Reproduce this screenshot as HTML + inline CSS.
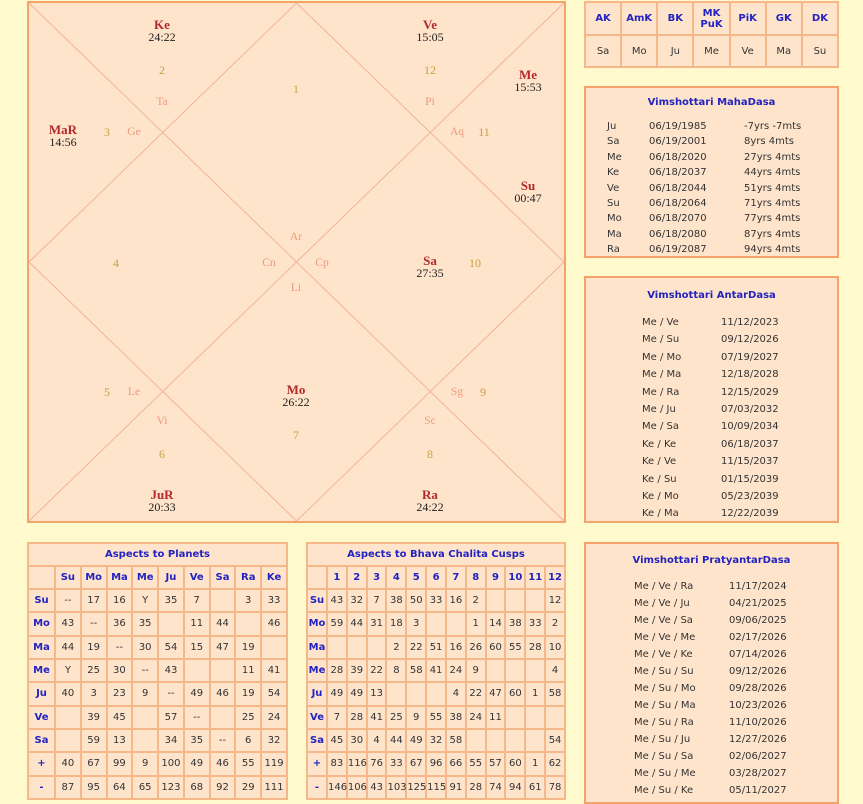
<!DOCTYPE html>
<html><head><meta charset="utf-8"><style>
*{margin:0;padding:0;box-sizing:border-box}
body{width:863px;height:800px;background:#fffacd;position:relative;overflow:hidden;font-family:"DejaVu Sans","Liberation Sans",sans-serif;font-size:10px;color:#333}
.box{position:absolute;background:#ffe4cc;border:2px solid #f4a46a}
.c{position:absolute;transform:translate(-50%,-50%);font-family:"Liberation Serif",serif;white-space:nowrap;text-align:center;line-height:12px}
.p{color:#b22a2a;font-weight:bold;font-size:13px;display:block}
.d{color:#222;font-size:12px;display:block}
.n{color:#c9a040;font-size:12px}
.s{color:#eb9a7c;font-size:11.5px}
table{border-collapse:collapse;table-layout:fixed;position:absolute;background:#ffe4cc}
td{border:2px solid #f6b888;text-align:center;font-size:10px;color:#333;padding:0;white-space:nowrap}
.h{color:#2323c0;font-weight:bold}
.t{position:absolute;color:#2323c0;font-weight:bold;font-size:10px;text-align:center;left:0;right:0}
.r{position:absolute;white-space:nowrap;font-size:10px;color:#333}
</style></head><body>

<div class="box" style="left:27px;top:1px;width:539px;height:522px">
<svg width="535" height="518" style="position:absolute;left:0;top:0" stroke="#f2b493" stroke-width="1" fill="none">
<line x1="0" y1="0" x2="535" y2="518"/><line x1="535" y1="0" x2="0" y2="518"/>
<polygon points="267.5,0 535,259 267.5,518 0,259"/>
</svg>
</div>
<div class="c" style="left:162px;top:31px"><span class="p">Ke</span><span class="d">24:22</span></div>
<div class="c n" style="left:162px;top:70px">2</div>
<div class="c s" style="left:162px;top:102px">Ta</div>
<div class="c n" style="left:296px;top:89px">1</div>
<div class="c" style="left:430px;top:31px"><span class="p">Ve</span><span class="d">15:05</span></div>
<div class="c n" style="left:430px;top:70px">12</div>
<div class="c s" style="left:430px;top:102px">Pi</div>
<div class="c" style="left:528px;top:81px"><span class="p">Me</span><span class="d">15:53</span></div>
<div class="c s" style="left:457px;top:132px">Aq</div>
<div class="c n" style="left:484px;top:132px">11</div>
<div class="c" style="left:63px;top:136px"><span class="p">MaR</span><span class="d">14:56</span></div>
<div class="c n" style="left:107px;top:132px">3</div>
<div class="c s" style="left:134px;top:132px">Ge</div>
<div class="c" style="left:528px;top:192px"><span class="p">Su</span><span class="d">00:47</span></div>
<div class="c s" style="left:296px;top:237px">Ar</div>
<div class="c s" style="left:269px;top:263px">Cn</div>
<div class="c s" style="left:322px;top:263px">Cp</div>
<div class="c n" style="left:116px;top:263px">4</div>
<div class="c" style="left:430px;top:267px"><span class="p">Sa</span><span class="d">27:35</span></div>
<div class="c n" style="left:475px;top:263px">10</div>
<div class="c s" style="left:296px;top:288px">Li</div>
<div class="c n" style="left:107px;top:392px">5</div>
<div class="c s" style="left:134px;top:392px">Le</div>
<div class="c" style="left:296px;top:396px"><span class="p">Mo</span><span class="d">26:22</span></div>
<div class="c s" style="left:457px;top:392px">Sg</div>
<div class="c n" style="left:483px;top:392px">9</div>
<div class="c s" style="left:162px;top:421px">Vi</div>
<div class="c s" style="left:430px;top:421px">Sc</div>
<div class="c n" style="left:296px;top:435px">7</div>
<div class="c n" style="left:162px;top:454px">6</div>
<div class="c n" style="left:430px;top:454px">8</div>
<div class="c" style="left:162px;top:501px"><span class="p">JuR</span><span class="d">20:33</span></div>
<div class="c" style="left:430px;top:501px"><span class="p">Ra</span><span class="d">24:22</span></div>

<table style="left:584px;top:1px;width:255px;height:67px;border:2px solid #f4a46a">
<tr style="height:33px"><td class="h">AK</td><td class="h">AmK</td><td class="h">BK</td><td class="h">MK<br>PuK</td><td class="h">PiK</td><td class="h">GK</td><td class="h">DK</td></tr>
<tr><td>Sa</td><td>Mo</td><td>Ju</td><td>Me</td><td>Ve</td><td>Ma</td><td>Su</td></tr>
</table>

<div class="box" style="left:584px;top:86px;width:255px;height:172px">
<div class="t" style="top:9px">Vimshottari MahaDasa</div>
<div class="r" style="left:21px;top:31px;line-height:15.4px">Ju<br>Sa<br>Me<br>Ke<br>Ve<br>Su<br>Mo<br>Ma<br>Ra</div>
<div class="r" style="left:63px;top:31px;line-height:15.4px">06/19/1985<br>06/19/2001<br>06/18/2020<br>06/18/2037<br>06/18/2044<br>06/18/2064<br>06/18/2070<br>06/18/2080<br>06/19/2087</div>
<div class="r" style="left:158px;top:31px;line-height:15.4px">-7yrs -7mts<br>8yrs 4mts<br>27yrs 4mts<br>44yrs 4mts<br>51yrs 4mts<br>71yrs 4mts<br>77yrs 4mts<br>87yrs 4mts<br>94yrs 4mts</div>
</div>

<div class="box" style="left:584px;top:276px;width:255px;height:247px">
<div class="t" style="top:12px">Vimshottari AntarDasa</div>
<div class="r" style="left:56px;top:36px;line-height:17.4px">Me / Ve<br>Me / Su<br>Me / Mo<br>Me / Ma<br>Me / Ra<br>Me / Ju<br>Me / Sa<br>Ke / Ke<br>Ke / Ve<br>Ke / Su<br>Ke / Mo<br>Ke / Ma</div>
<div class="r" style="left:135px;top:36px;line-height:17.4px">11/12/2023<br>09/12/2026<br>07/19/2027<br>12/18/2028<br>12/15/2029<br>07/03/2032<br>10/09/2034<br>06/18/2037<br>11/15/2037<br>01/15/2039<br>05/23/2039<br>12/22/2039</div>
</div>

<div class="box" style="left:584px;top:542px;width:255px;height:262px">
<div class="t" style="top:11px">Vimshottari PratyantarDasa</div>
<div class="r" style="left:48px;top:34px;line-height:17px">Me / Ve / Ra<br>Me / Ve / Ju<br>Me / Ve / Sa<br>Me / Ve / Me<br>Me / Ve / Ke<br>Me / Su / Su<br>Me / Su / Mo<br>Me / Su / Ma<br>Me / Su / Ra<br>Me / Su / Ju<br>Me / Su / Sa<br>Me / Su / Me<br>Me / Su / Ke</div>
<div class="r" style="left:143px;top:34px;line-height:17px">11/17/2024<br>04/21/2025<br>09/06/2025<br>02/17/2026<br>07/14/2026<br>09/12/2026<br>09/28/2026<br>10/23/2026<br>11/10/2026<br>12/27/2026<br>02/06/2027<br>03/28/2027<br>05/11/2027</div>
</div>

<table style="left:27px;top:542px;width:261px;height:258px;border:2px solid #f4a46a">
<colgroup><col style="width:27px"><col span="9"></colgroup>
<tr style="height:23px"><td colspan="10" class="h">Aspects to Planets</td></tr>
<tr style="height:23px"><td></td><td class="h">Su</td><td class="h">Mo</td><td class="h">Ma</td><td class="h">Me</td><td class="h">Ju</td><td class="h">Ve</td><td class="h">Sa</td><td class="h">Ra</td><td class="h">Ke</td></tr>
<tr><td class="h">Su</td><td>--</td><td>17</td><td>16</td><td>Y</td><td>35</td><td>7</td><td></td><td>3</td><td>33</td></tr>
<tr><td class="h">Mo</td><td>43</td><td>--</td><td>36</td><td>35</td><td></td><td>11</td><td>44</td><td></td><td>46</td></tr>
<tr><td class="h">Ma</td><td>44</td><td>19</td><td>--</td><td>30</td><td>54</td><td>15</td><td>47</td><td>19</td><td></td></tr>
<tr><td class="h">Me</td><td>Y</td><td>25</td><td>30</td><td>--</td><td>43</td><td></td><td></td><td>11</td><td>41</td></tr>
<tr><td class="h">Ju</td><td>40</td><td>3</td><td>23</td><td>9</td><td>--</td><td>49</td><td>46</td><td>19</td><td>54</td></tr>
<tr><td class="h">Ve</td><td></td><td>39</td><td>45</td><td></td><td>57</td><td>--</td><td></td><td>25</td><td>24</td></tr>
<tr><td class="h">Sa</td><td></td><td>59</td><td>13</td><td></td><td>34</td><td>35</td><td>--</td><td>6</td><td>32</td></tr>
<tr><td class="h">+</td><td>40</td><td>67</td><td>99</td><td>9</td><td>100</td><td>49</td><td>46</td><td>55</td><td>119</td></tr>
<tr><td class="h">-</td><td>87</td><td>95</td><td>64</td><td>65</td><td>123</td><td>68</td><td>92</td><td>29</td><td>111</td></tr>
</table>

<table style="left:306px;top:542px;width:260px;height:258px;border:2px solid #f4a46a">
<colgroup><col style="width:20px"><col span="12"></colgroup>
<tr style="height:23px"><td colspan="13" class="h">Aspects to Bhava Chalita Cusps</td></tr>
<tr style="height:23px"><td></td><td class="h">1</td><td class="h">2</td><td class="h">3</td><td class="h">4</td><td class="h">5</td><td class="h">6</td><td class="h">7</td><td class="h">8</td><td class="h">9</td><td class="h">10</td><td class="h">11</td><td class="h">12</td></tr>
<tr><td class="h">Su</td><td>43</td><td>32</td><td>7</td><td>38</td><td>50</td><td>33</td><td>16</td><td>2</td><td></td><td></td><td></td><td>12</td></tr>
<tr><td class="h">Mo</td><td>59</td><td>44</td><td>31</td><td>18</td><td>3</td><td></td><td></td><td>1</td><td>14</td><td>38</td><td>33</td><td>2</td></tr>
<tr><td class="h">Ma</td><td></td><td></td><td></td><td>2</td><td>22</td><td>51</td><td>16</td><td>26</td><td>60</td><td>55</td><td>28</td><td>10</td></tr>
<tr><td class="h">Me</td><td>28</td><td>39</td><td>22</td><td>8</td><td>58</td><td>41</td><td>24</td><td>9</td><td></td><td></td><td></td><td>4</td></tr>
<tr><td class="h">Ju</td><td>49</td><td>49</td><td>13</td><td></td><td></td><td></td><td>4</td><td>22</td><td>47</td><td>60</td><td>1</td><td>58</td></tr>
<tr><td class="h">Ve</td><td>7</td><td>28</td><td>41</td><td>25</td><td>9</td><td>55</td><td>38</td><td>24</td><td>11</td><td></td><td></td><td></td></tr>
<tr><td class="h">Sa</td><td>45</td><td>30</td><td>4</td><td>44</td><td>49</td><td>32</td><td>58</td><td></td><td></td><td></td><td></td><td>54</td></tr>
<tr><td class="h">+</td><td>83</td><td>116</td><td>76</td><td>33</td><td>67</td><td>96</td><td>66</td><td>55</td><td>57</td><td>60</td><td>1</td><td>62</td></tr>
<tr><td class="h">-</td><td>146</td><td>106</td><td>43</td><td>103</td><td>125</td><td>115</td><td>91</td><td>28</td><td>74</td><td>94</td><td>61</td><td>78</td></tr>
</table>
</body></html>
